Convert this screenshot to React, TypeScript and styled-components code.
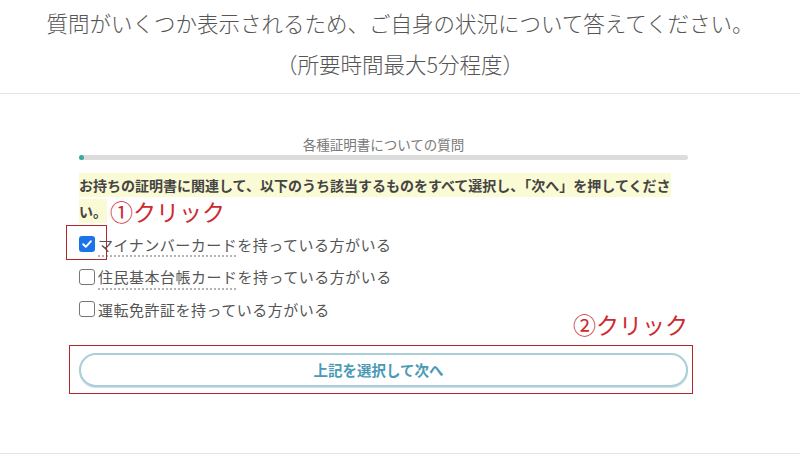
import styled, { createGlobalStyle } from 'styled-components';

const GlobalStyle = createGlobalStyle`
    html, body {
        margin: 0;
        padding: 0;
        background: #ffffff;
    }
    body {
        font-family: "Noto Sans CJK JP", "Noto Sans", sans-serif;
        color: #555555;
    }
`;

const Header = styled.header`
    padding: 2px 0 9px;
    border-bottom: 1px solid #dbe7ea;
    text-align: center;
    font-size: 21.5px;
    line-height: 41px;
    font-weight: 300;
    color: #555555;
`;

const HeaderLine = styled.div`
    margin: 0;
`;

const Main = styled.main`
    padding: 40px 0 66px;
    border-bottom: 1px solid #dbe7ea;
`;

const Card = styled.section`
    margin-left: 79px;
    width: 609px;
`;

const QuestionTitle = styled.div`
    text-align: center;
    font-size: 13.5px;
    line-height: 20px;
    color: #7a7a7a;
`;

const ProgressTrack = styled.div`
    position: relative;
    margin-top: 1px;
    height: 5px;
    border-radius: 3px;
    background: #dcdcdc;
`;

const ProgressDot = styled.span`
    position: absolute;
    left: 0;
    top: 0;
    width: 5px;
    height: 5px;
    border-radius: 50%;
    background: #3aa79b;
`;

const Question = styled.div`
    margin-top: 12px;
    font-size: 14px;
    font-weight: 700;
    color: #444444;
`;

const QuestionRow = styled.div`
    display: flex;
    align-items: center;
    gap: 3px;
    height: 26px;
`;

const Highlight = styled.span`
    display: inline-block;
    line-height: 24px;
    background: #fafad4;
    white-space: nowrap;
`;

const Note = styled.span`
    color: #cc2a30;
    font-size: 23px;
    line-height: 26px;
    font-weight: 400;
    white-space: nowrap;
`;

const FloatNote = styled(Note)`
    position: absolute;
    top: -42px;
    right: 0;
`;

const Options = styled.ul`
    list-style: none;
    margin: 4px 0 0;
    padding: 0;
`;

const Option = styled.li`
    position: relative;
    display: flex;
    align-items: center;
    gap: 3px;
    height: 32.5px;
    font-size: 15px;
    letter-spacing: 0.5px;
    color: #555555;
`;

const Box = styled.span<{ $checked: boolean }>`
    display: flex;
    align-items: center;
    justify-content: center;
    box-sizing: border-box;
    width: 16px;
    height: 16px;
    border-radius: 3px;
    border: ${(p) => (p.$checked ? 'none' : '1.5px solid #767676')};
    background: ${(p) => (p.$checked ? '#1a73e8' : '#ffffff')};
`;

const Dotted = styled.span`
    text-decoration: underline dotted #9a9a9a;
    text-underline-offset: 5px;
`;

const Frame = styled.span<{ $top: number; $left: number; $w: number; $h: number }>`
    position: absolute;
    top: ${(p) => p.$top}px;
    left: ${(p) => p.$left}px;
    width: ${(p) => p.$w}px;
    height: ${(p) => p.$h}px;
    box-sizing: border-box;
    border: 1.5px solid #b3262c;
    pointer-events: none;
`;

const ButtonArea = styled.div`
    position: relative;
    margin-top: 27px;
`;

const NextButton = styled.button`
    display: block;
    width: 100%;
    height: 34px;
    box-sizing: border-box;
    padding: 0 10px 0 0;
    border: 2px solid #aacfd9;
    border-radius: 17px;
    background: #ffffff;
    box-shadow: 0 1px 1px rgba(120, 160, 175, 0.35);
    font-family: "Noto Sans CJK JP", "Noto Sans", sans-serif;
    font-size: 14.5px;
    font-weight: 700;
    color: #4a9ab6;
    cursor: pointer;
`;

function CheckMark() {
    return (
        <svg width="12" height="12" viewBox="0 0 12 12">
            <path d="M2.2 6.3 L4.8 8.8 L9.8 3.3" fill="none" stroke="#ffffff" strokeWidth="2" strokeLinecap="round" strokeLinejoin="round" />
        </svg>
    );
}

export default function App() {
    return (
        <>
            <GlobalStyle />
            <Header>
                <HeaderLine>質問がいくつか表示されるため、ご自身の状況について答えてください。</HeaderLine>
                <HeaderLine>（所要時間最大5分程度）</HeaderLine>
            </Header>
            <Main>
                <Card>
                    <QuestionTitle>各種証明書についての質問</QuestionTitle>
                    <ProgressTrack>
                        <ProgressDot />
                    </ProgressTrack>
                    <Question>
                        <QuestionRow>
                            <Highlight>
                                お持ちの証明書に関連して、以下のうち該当するものをすべて選択し、「次へ」を押してくださ
                            </Highlight>
                        </QuestionRow>
                        <QuestionRow>
                            <Highlight>い。</Highlight>
                            <Note>①クリック</Note>
                        </QuestionRow>
                    </Question>
                    <Options>
                        <Option>
                            <Box $checked>
                                <CheckMark />
                            </Box>
                            <span>
                                <Dotted>マイナンバーカード</Dotted>を持っている方がいる
                            </span>
                            <Frame $top={-3} $left={-13} $w={41} $h={35} />
                        </Option>
                        <Option>
                            <Box $checked={false} />
                            <span>
                                <Dotted>住民基本台帳カード</Dotted>を持っている方がいる
                            </span>
                        </Option>
                        <Option>
                            <Box $checked={false} />
                            <span>運転免許証を持っている方がいる</span>
                        </Option>
                    </Options>
                    <ButtonArea>
                        <FloatNote>②クリック</FloatNote>
                        <NextButton type="button">上記を選択して次へ</NextButton>
                        <Frame $top={-8} $left={-10} $w={624} $h={49} />
                    </ButtonArea>
                </Card>
            </Main>
        </>
    );
}
